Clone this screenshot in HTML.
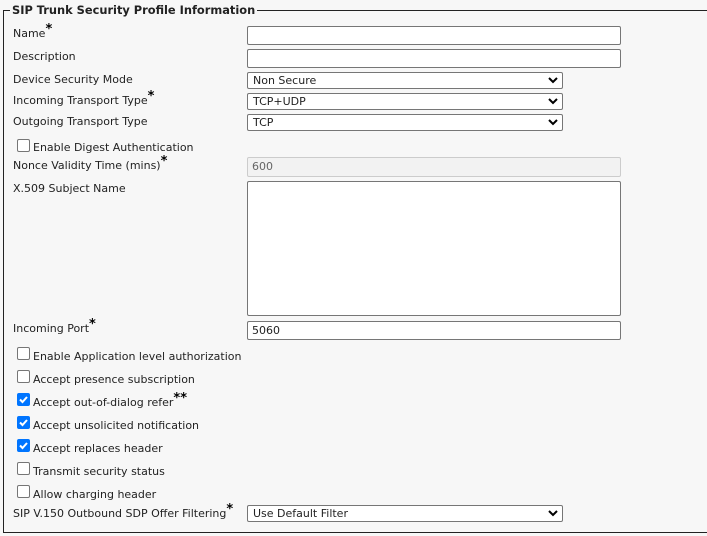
<!DOCTYPE html>
<html><head><style>
body{margin:0;width:707px;height:536px;background:#f7f7f7;font-family:"DejaVu Sans",Verdana,sans-serif;font-size:11px;color:#222;position:relative;overflow:hidden}
.a{position:absolute;white-space:nowrap}
.fs{position:absolute;left:3px;top:10px;width:800px;height:521px;border:1px solid #222;border-right:none}
.lg{position:absolute;left:10px;top:3px;background:#f7f7f7;padding:0 2px;font-weight:bold;font-size:11.4px}
.in{position:absolute;left:247px;width:372px;height:17px;border:1px solid #767676;border-radius:2px;background:#fff;box-sizing:content-box}
.sel{position:absolute;left:247px;width:316px;height:15px;border:1px solid #767676;border-radius:2px;background:#fff;font-size:11px;line-height:15px;padding-left:5px;box-sizing:border-box}
.sel svg{position:absolute;right:4px;top:4px}
.cb{position:absolute;left:17px;width:11px;height:11px;border:1px solid #767676;border-radius:2px;background:#fff}
.cb.on{background:#0075ff;border-color:#0075ff}
.st{font-size:13px;font-weight:bold;position:relative;top:-4px;line-height:0;color:#000}
</style></head><body>
<div class="fs"></div>
<div class="a lg" style="left:10px;top:3px">SIP Trunk Security Profile Information</div>

<div class="a" style="left:13px;top:27px">Name<span class="st">*</span></div>
<div class="in" style="top:26px"></div>
<div class="a" style="left:13px;top:50px">Description</div>
<div class="in" style="top:49px"></div>
<div class="a" style="left:13px;top:73px">Device Security Mode</div>
<div class="sel" style="top:72px;height:17px">Non Secure<svg width="10" height="7"><path d="M1 1l4 4 4-4" stroke="#000" stroke-width="2" fill="none"/></svg></div>
<div class="a" style="left:13px;top:94px">Incoming Transport Type<span class="st">*</span></div>
<div class="sel" style="top:93px;height:17px">TCP+UDP<svg width="10" height="7"><path d="M1 1l4 4 4-4" stroke="#000" stroke-width="2" fill="none"/></svg></div>
<div class="a" style="left:13px;top:115px">Outgoing Transport Type</div>
<div class="sel" style="top:114px;height:17px">TCP<svg width="10" height="7"><path d="M1 1l4 4 4-4" stroke="#000" stroke-width="2" fill="none"/></svg></div>

<div class="cb" style="top:139px"></div>
<div class="a" style="left:33px;top:141px">Enable Digest Authentication</div>
<div class="a" style="left:13px;top:159px">Nonce Validity Time (mins)<span class="st">*</span></div>
<div class="in" style="top:157px;height:18px;background:#f2f2f2;border-color:#ccc;color:#666;line-height:18px;padding-left:4px;width:368px">600</div>
<div class="a" style="left:13px;top:182px">X.509 Subject Name</div>
<div class="in" style="top:181px;height:133px"></div>
<div class="a" style="left:13px;top:322px">Incoming Port<span class="st">*</span></div>
<div class="in" style="top:321px;height:17px;line-height:17px;padding-left:4px;width:368px">5060</div>

<div class="cb" style="top:347px"></div><div class="a" style="left:33px;top:350px">Enable Application level authorization</div>
<div class="cb" style="top:370px"></div><div class="a" style="left:33px;top:373px">Accept presence subscription</div>
<div class="cb on" style="top:393px"><svg width="11" height="11"><path d="M2 5.5l2.5 2.5 4.5-5" stroke="#fff" stroke-width="2" fill="none"/></svg></div><div class="a" style="left:33px;top:396px">Accept out-of-dialog refer<span class="st">**</span></div>
<div class="cb on" style="top:416px"><svg width="11" height="11"><path d="M2 5.5l2.5 2.5 4.5-5" stroke="#fff" stroke-width="2" fill="none"/></svg></div><div class="a" style="left:33px;top:419px">Accept unsolicited notification</div>
<div class="cb on" style="top:439px"><svg width="11" height="11"><path d="M2 5.5l2.5 2.5 4.5-5" stroke="#fff" stroke-width="2" fill="none"/></svg></div><div class="a" style="left:33px;top:442px">Accept replaces header</div>
<div class="cb" style="top:462px"></div><div class="a" style="left:33px;top:465px">Transmit security status</div>
<div class="cb" style="top:485px"></div><div class="a" style="left:33px;top:488px">Allow charging header</div>
<div class="a" style="left:13px;top:507px">SIP V.150 Outbound SDP Offer Filtering<span class="st">*</span></div>
<div class="sel" style="top:505px;height:17px">Use Default Filter<svg width="10" height="7"><path d="M1 1l4 4 4-4" stroke="#000" stroke-width="2" fill="none"/></svg></div>
</body></html>
